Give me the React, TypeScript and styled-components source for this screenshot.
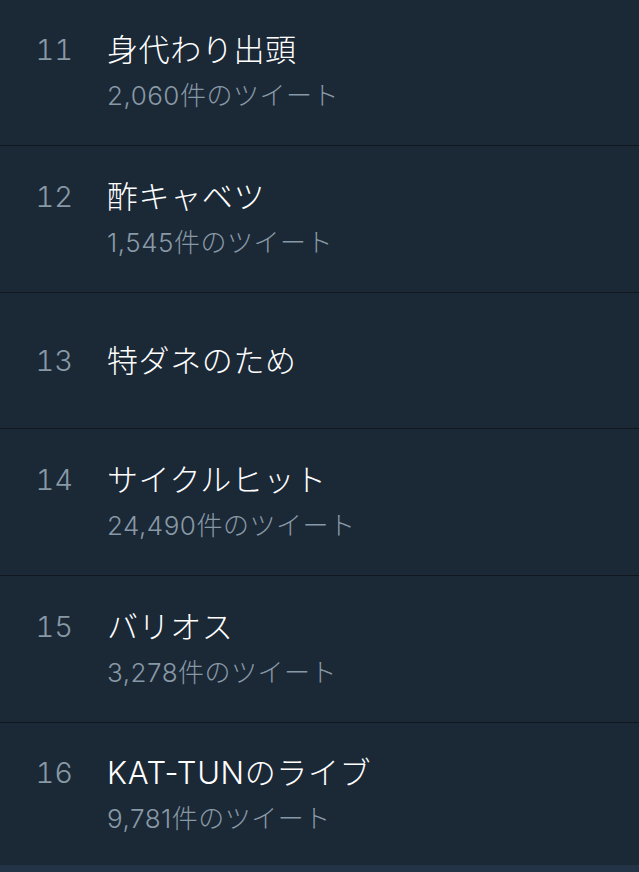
import React from "react";
import styled, { createGlobalStyle } from "styled-components";

const Global = createGlobalStyle`
  html, body { margin: 0; padding: 0; background: #1b2836; }
  body { font-family: Inter, "Noto Sans CJK JP", sans-serif; -webkit-font-smoothing: antialiased; }
`;

const Page = styled.div`
  width: 639px;
  height: 872px;
  overflow: hidden;
  display: flex;
  flex-direction: column;
  background: #1b2836;
`;

const List = styled.ul`
  list-style: none;
  margin: -1px 0 0;
  padding: 0;
`;

const Row = styled.li<{ $tall: boolean }>`
  height: ${(p) => (p.$tall ? 147 : 136)}px;
  box-sizing: border-box;
  border-bottom: 1px solid #10171e;
  display: grid;
  grid-template-columns: 73px 1fr;
  column-gap: 34px;
  align-content: center;
  &:last-child { border-bottom: none; height: 142px; padding-top: 2px; }
`;

const Rank = styled.span`
  grid-column: 1;
  grid-row: 1;
  text-align: right;
  font-size: 29px;
  line-height: 36px;
  font-weight: 300;
  color: #8899a6;
  font-family: Inter, "Liberation Sans", sans-serif;
  font-feature-settings: "tnum" 1;
`;

const Title = styled.span`
  grid-column: 2;
  grid-row: 1;
  font-size: 31px;
  line-height: 36px;
  font-weight: 300;
  color: #ffffff;
  letter-spacing: 0.6px;
`;

const Count = styled.span`
  grid-column: 2;
  grid-row: 2;
  margin-top: 12px;
  font-size: 26px;
  line-height: 32px;
  font-weight: 300;
  color: #8899a6;
  letter-spacing: 0.5px;
`;

const Footer = styled.div`
  flex: 1;
  background: #243447;
`;

const trends = [
  { rank: 11, title: "身代わり出頭", count: "2,060" },
  { rank: 12, title: "酢キャベツ", count: "1,545" },
  { rank: 13, title: "特ダネのため", count: null },
  { rank: 14, title: "サイクルヒット", count: "24,490" },
  { rank: 15, title: "バリオス", count: "3,278" },
  { rank: 16, title: "KAT-TUNのライブ", count: "9,781" },
];

export default function App() {
  return (
    <Page>
      <Global />
      <List>
        {trends.map((t) => (
          <Row key={t.rank} $tall={t.count !== null}>
            <Rank>{t.rank}</Rank>
            <Title>{t.title}</Title>
            {t.count && <Count>{t.count}件のツイート</Count>}
          </Row>
        ))}
      </List>
      <Footer />
    </Page>
  );
}
